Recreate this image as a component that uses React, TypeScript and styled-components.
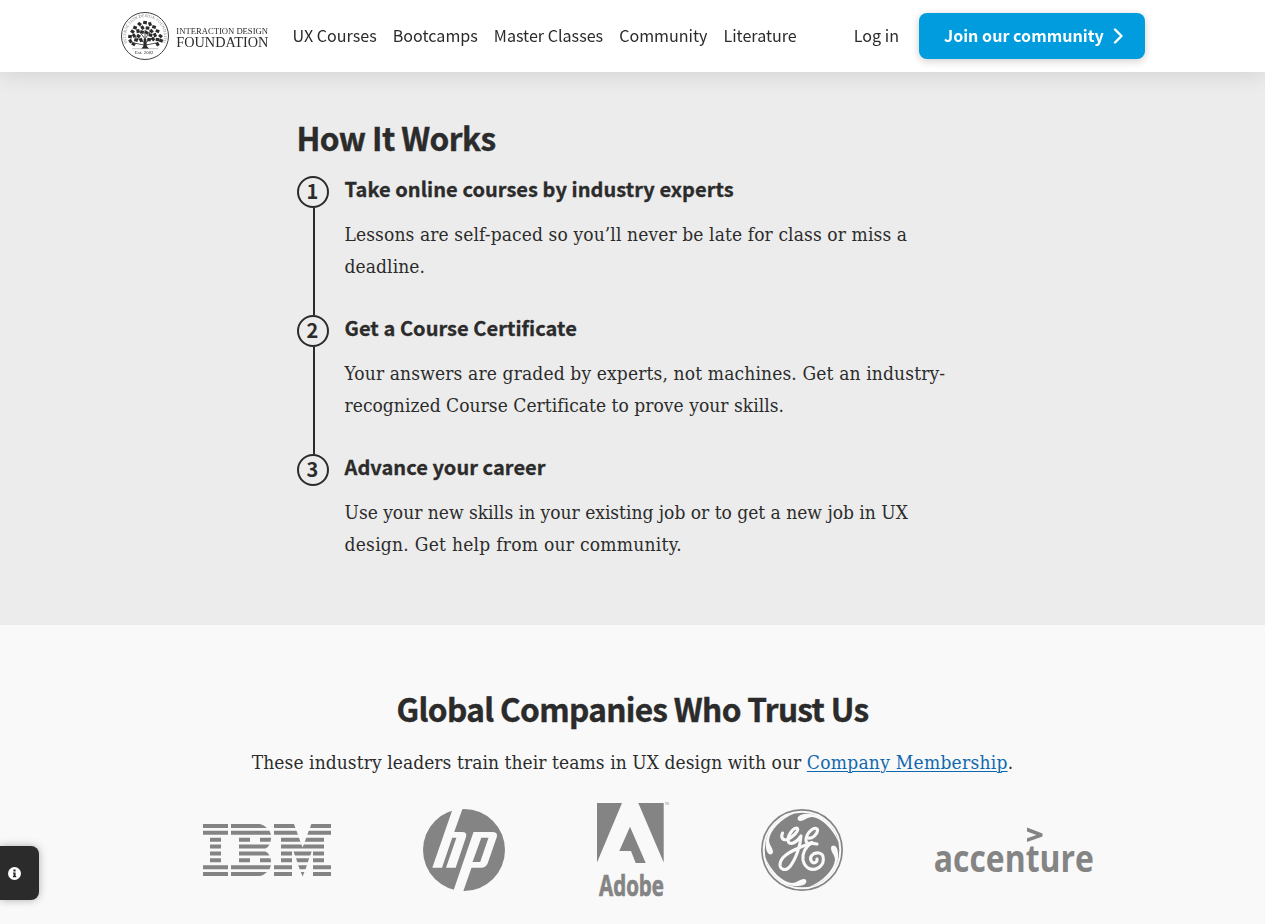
import React from "react";
import styled, { createGlobalStyle } from "styled-components";

const sans = `"Noto Sans CJK SC", "Noto Sans", sans-serif`;
const serif = `"DejaVu Serif Condensed", "DejaVu Serif", serif`;
const ink = "#2b2b2b";
const logoGrey = "#848484";

const GlobalStyle = createGlobalStyle`
  * { box-sizing: border-box; }
  html, body { margin: 0; padding: 0; }
  body {
    background: #f9f9f9;
    color: ${ink};
    font-family: ${sans};
    height: 924px;
    overflow: hidden;
  }
  h2, h3, p, ol { margin: 0; padding: 0; }
`;

const Header = styled.header`
  position: sticky;
  top: 0;
  z-index: 2;
  display: flex;
  align-items: center;
  height: 72px;
  padding: 0 120px 0 121px;
  background: #fff;
  box-shadow: 0 0 24px rgba(0, 0, 0, 0.14);
  will-change: transform;
`;

const Brand = styled.a`
  display: flex;
  width: 148px;
  height: 48px;
  margin-right: 23.5px;
  svg { overflow: visible; }
`;

const Nav = styled.nav`
  display: flex;
  gap: 16px;
  flex: 1;
`;

const NavLink = styled.a`
  margin-top: -2px;
  font-size: 16.1px;
  line-height: 24px;
  white-space: nowrap;
`;

const JoinButton = styled.a`
  display: flex;
  align-items: center;
  justify-content: space-between;
  width: 226px;
  height: 46px;
  margin-left: 20px;
  padding: 0 21px 0 25px;
  border-radius: 8px;
  background: #009cde;
  color: #fff;
  font-size: 16.1px;
  font-weight: 700;
  line-height: 24px;
  white-space: nowrap;
  box-shadow: 0 2px 8px rgba(0, 0, 0, 0.2);
`;

const JoinLabel = styled.span`
  margin-top: -2px;
`;

const HowSection = styled.section`
  height: 553px;
  padding: 43px 0 0 296.5px;
  background: #ececec;
`;

const Heading = styled.h2<{ $track?: number }>`
  font-size: 31.6px;
  font-weight: 700;
  line-height: 44px;
  letter-spacing: ${(p) => p.$track ?? 0}px;
  -webkit-text-stroke: 0.4px ${ink};
`;

const Steps = styled.ol`
  list-style: none;
  margin-top: 17px;
`;

const Step = styled.li`
  display: flex;
  gap: 16px;
  height: 139px;
`;

const Rail = styled.div`
  display: flex;
  flex-direction: column;
  align-items: center;
  width: 32px;
`;

const StepNumber = styled.span`
  display: flex;
  align-items: center;
  justify-content: center;
  flex: none;
  width: 32px;
  height: 32px;
  padding-bottom: 2px;
  border: 2px solid ${ink};
  border-radius: 50%;
  font-size: 20px;
  font-weight: 700;
  line-height: 26px;
`;

const Connector = styled.span`
  flex: 1;
  width: 2px;
  margin-left: 2px;
  background: ${ink};
`;

const StepTitle = styled.h3`
  font-size: 20px;
  font-weight: 700;
  line-height: 26px;
  letter-spacing: 0.06px;
  -webkit-text-stroke: 0.3px ${ink};
`;

const StepText = styled.p`
  margin-top: 16px;
  font-family: ${serif};
`;

const Line = styled.span<{ $track?: number }>`
  display: block;
  font-size: 19px;
  line-height: 32px;
  white-space: nowrap;
  letter-spacing: ${(p) => p.$track ?? 0}px;
`;

const TrustSection = styled.section`
  display: flex;
  flex-direction: column;
  align-items: center;
  height: 299px;
  padding-top: 61px;
`;

const TrustText = styled.p`
  margin-top: 16px;
  font-family: ${serif};
`;

const TextLink = styled.a`
  color: #0f68ae;
  letter-spacing: 0.27px;
  text-decoration: underline;
  text-decoration-thickness: 1px;
  text-underline-offset: 2px;
`;

const Logos = styled.div`
  display: flex;
  align-items: center;
  gap: 92px;
  height: 94px;
  margin-top: 25px;
  padding-left: 31px;
  svg { display: block; overflow: visible; }
`;

const InfoTab = styled.button`
  position: fixed;
  left: 0;
  top: 846px;
  z-index: 3;
  display: flex;
  align-items: center;
  width: 39px;
  height: 54px;
  padding: 0 0 0 8px;
  border: 0;
  border-radius: 0 8px 8px 0;
  background: #2b2b2b;
  box-shadow: 0 0 8px rgba(0, 0, 0, 0.3);
`;

const leaves: [number, number, number][] = [
  [24, 10.5, 10], [18.5, 12, 40], [29, 12, 70], [14, 15.5, 20], [33, 15, 15], [21.5, 15.5, 60], [26.5, 16, 5],
  [11.5, 19.5, 35], [17, 19, 80], [30.5, 19, 50], [36.5, 19, 25], [9, 24.5, 10], [13, 23.5, 55], [21, 20, 15],
  [34, 23, 70], [39.5, 24, 40], [17.5, 24, 35], [29.5, 23, 20], [9.5, 29, 60], [15, 28, 15], [36.5, 27.5, 5],
  [32, 27, 45], [25.5, 20.5, 30], [40, 28.5, 20], [12.5, 32, 30], [36.5, 32, 60], [20, 28, 70], [28, 27.5, 10],
];

const BrandLogo = () => (
  <svg width="148" height="48" viewBox="0 0 148 48">
    <circle cx="24" cy="24" r="23.5" fill="none" stroke={ink} strokeWidth="0.9" />
    <path id="seal" d="M6.3 31 A19 19 0 1 1 41.7 31" fill="none" />
    <text fontSize="4.2" fill="#777" fontFamily="Liberation Serif, serif">
      <textPath href="#seal" textLength="76">INTERACTION DESIGN FOUNDATION</textPath>
    </text>
    {leaves.map(([x, y, r], i) => (
      <rect key={i} x={x - 1.8} y={y - 1.5} width="3.7" height="3.1" fill={ink} transform={`rotate(${r} ${x} ${y})`} />
    ))}
    <path
      d="M24 36V18M24 31L14 25M24 31L35 24M24 27L18 19M24 27L30 18M23 33L13 31M25 33L35 31"
      fill="none" stroke={ink} strokeWidth="0.8"
    />
    <path d="M22.7 27H25.3L25.8 34L28 36.7H20.3L22.4 34Z" fill={ink} />
    <path d="M11 36.7H37" stroke="#888" strokeWidth="0.5" />
    <text x="14" y="42" textLength="18.5" fontSize="4.8" fill={ink} fontFamily="Liberation Serif, serif">Est. 2002</text>
    <text x="55.3" y="22" textLength="91.7" lengthAdjust="spacingAndGlyphs" fontSize="9" fill={ink} fontFamily="Liberation Serif, serif">
      INTERACTION DESIGN
    </text>
    <text x="55.3" y="35.1" textLength="92" lengthAdjust="spacingAndGlyphs" fontSize="14.4" fill={ink} fontFamily="Liberation Serif, serif">
      FOUNDATION
    </text>
  </svg>
);

const ibmRows: string[] = [
  "M0 0H25V4H0ZM28 0H57Q61 1 64 4H28ZM71 0H91L92.4 4H71ZM108.3 0H128V4H107Z",
  "M0 0H25V4H0ZM28 0H66.5L68 4H28ZM71 0H93.5L94.9 4H71ZM105.7 0H128V4H104.4Z",
  "M7 0H18V4H7ZM36 0H47V4H36ZM57 0H68.2L67.5 4H57ZM78 0H96L97.4 4H78ZM103.2 0H121V4H101.8Z",
  "M7 0H18V4H7ZM36 0H66.5Q65 3 62.5 4H36ZM78 0H98.5L99.6 3L100.7 0H121V4H78Z",
  "M7 0H18V4H7ZM36 0H62.5Q65 1 66.5 4H36ZM78 0H89V4H78ZM90.5 0H108.7L107.3 4H91.9ZM110 0H121V4H110Z",
  "M7 0H18V4H7ZM36 0H47V4H36ZM57 0H67.5L68.2 4H57ZM78 0H89V4H78ZM93 0H106.2L104.8 4H94.4ZM110 0H121V4H110Z",
  "M0 0H25V4H0ZM28 0H68L66.5 4H28ZM71 0H89V4H71ZM95.3 0H103.9L102.5 4H96.7ZM110 0H128V4H110Z",
  "M0 0H25V4H0ZM28 0H64Q61 3 57 4H28ZM71 0H89V4H71ZM97.8 0H101.4L99.6 4.5ZM110 0H128V4H110Z",
];

const IbmLogo = () => (
  <svg width="128" height="52" viewBox="0 0 128 52" fill={logoGrey}>
    {ibmRows.map((d, i) => <path key={i} d={d} transform={`translate(0 ${i * 6.86})`} />)}
  </svg>
);

const HpLogo = () => (
  <svg width="82" height="82" viewBox="0 0 82 82">
    <circle cx="41" cy="41" r="41" fill={logoGrey} />
    <g fill="#f9f9f9">
      <path d="M30 -1H39.8L31.2 23H39Q44.5 23 43 28L32.7 58.7H23L33.4 28.7H29.2L19 58.7H9.3Z" />
      <path fillRule="evenodd" d="M50.5 23H69Q75.3 23 73.8 28L64.8 54Q63.2 58.7 58 58.7H48.5L40 83H30ZM58.3 28.7L49.5 53H57.2L65.5 28.7Z" />
    </g>
  </svg>
);

const AdobeLogo = () => (
  <svg width="72" height="94" viewBox="0 0 72 94" fill={logoGrey}>
    <path d="M0 0H25L0 59.5ZM41.3 0H66.7V59.5ZM33 23.7L48.7 60H38.7L34 48H22.3Z" />
    <text
      x="2" y="93.4" textLength="65" lengthAdjust="spacingAndGlyphs" fontFamily="Open Sans, sans-serif"
      fontWeight="700" fontSize="29" stroke={logoGrey} strokeWidth="0.7"
    >
      Adobe
    </text>
    <text x="67.7" y="2.4" fontFamily="Open Sans, sans-serif" fontSize="3">TM</text>
  </svg>
);

const GeLogo = () => (
  <svg width="82" height="82" viewBox="0 0 82 82">
    <circle cx="41" cy="41" r="41" fill={logoGrey} />
    <circle cx="41" cy="41" r="38.3" fill="none" stroke="#f9f9f9" strokeWidth="2" />
    {[0, 90, 180, 270].map((a) => (
      <path key={a} transform={`rotate(${a} 41 41)`} fill="#f9f9f9"
        d="M39 12C35.5 11.5 36 7.5 39.5 6C52 1.5 72 10 78 34C72 20 61 9 51 8C46 8 43 12.2 39 12Z" />
    ))}
    <g fill="none" stroke="#f9f9f9" strokeWidth="3.1" strokeLinecap="round" strokeLinejoin="round">
      <path d="M21.5 24C19.5 29 22 31.5 26 30.5C31 29 38 22 36.5 19.5C34 17 27 25 27 31C27.5 36.5 34 35.5 40 27C39.5 36 35 50 29 57.5C25 62.5 18.5 61 19 55C20 47 29 42.5 38 39C45 36 48 33 56 35" />
      <path d="M47.5 29C51 30 57 25 56.5 20.5C54 16.5 46 23 45 30C44.5 34 47 35 51 33.5C44 38 41 45 42 51C44 60 51 62 57 59C64 55.5 64 45 58 44C52 43 47.5 48 50.5 52.5C53 55.5 56.5 53 56 50" />
    </g>
  </svg>
);

const AccentureLogo = () => (
  <svg width="158" height="46" viewBox="0 0 158 46" fill={logoGrey}>
    <path d="M92 0.5L107.5 6.5V9.5L92 15V11.2L101.5 8L92 4.5Z" />
    <text x="-1.2" y="44.6" textLength="160" lengthAdjust="spacingAndGlyphs" fontFamily="Open Sans, sans-serif" fontWeight="700" fontSize="37.5">accenture</text>
  </svg>
);

const steps = [
  {
    title: "Take online courses by industry experts",
    lines: [
      { text: "Lessons are self-paced so you’ll never be late for class or miss a", track: 0.12 },
      { text: "deadline.", track: 0.1 },
    ],
  },
  {
    title: "Get a Course Certificate",
    lines: [
      { text: "Your answers are graded by experts, not machines. Get an industry-", track: 0.15 },
      { text: "recognized Course Certificate to prove your skills.", track: 0.05 },
    ],
  },
  {
    title: "Advance your career",
    lines: [
      { text: "Use your new skills in your existing job or to get a new job in UX", track: 0 },
      { text: "design. Get help from our community.", track: 0.27 },
    ],
  },
];

export default function App() {
  return (
    <>
      <GlobalStyle />
      <Header>
        <Brand><BrandLogo /></Brand>
        <Nav>
          {["UX Courses", "Bootcamps", "Master Classes", "Community", "Literature"].map((label) => (
            <NavLink key={label}>{label}</NavLink>
          ))}
        </Nav>
        <NavLink>Log in</NavLink>
        <JoinButton>
          <JoinLabel>Join our community</JoinLabel>
          <svg width="11" height="16" viewBox="0 0 11 16">
            <path d="M2 1.5L8.5 8L2 14.5" fill="none" stroke="#fff" strokeWidth="2.4" strokeLinejoin="round" strokeLinecap="round" />
          </svg>
        </JoinButton>
      </Header>
      <main>
        <HowSection>
          <Heading $track={-0.58}>How It Works</Heading>
          <Steps>
            {steps.map((step, i) => (
              <Step key={step.title}>
                <Rail>
                  <StepNumber>{i + 1}</StepNumber>
                  {i < steps.length - 1 && <Connector />}
                </Rail>
                <div>
                  <StepTitle>{step.title}</StepTitle>
                  <StepText>
                    {step.lines.map((line) => <Line key={line.text} $track={line.track}>{line.text}</Line>)}
                  </StepText>
                </div>
              </Step>
            ))}
          </Steps>
        </HowSection>
        <TrustSection>
          <Heading $track={-0.67}>Global Companies Who Trust Us</Heading>
          <TrustText>
            <Line $track={0.08}>
              These industry leaders train their teams in UX design with our <TextLink>Company Membership</TextLink>.
            </Line>
          </TrustText>
          <Logos>
            <IbmLogo />
            <HpLogo />
            <AdobeLogo />
            <GeLogo />
            <AccentureLogo />
          </Logos>
        </TrustSection>
      </main>
      <InfoTab aria-label="Information">
        <svg width="13" height="13" viewBox="0 0 13 13">
          <circle cx="6.5" cy="6.5" r="6.5" fill="#fff" />
          <path d="M5.4 2.6H7.6V4.4H5.4ZM4.9 5.4H7.6V9H8.2V10.2H4.9V9H5.5V6.6H4.9Z" fill="#2b2b2b" />
        </svg>
      </InfoTab>
    </>
  );
}
